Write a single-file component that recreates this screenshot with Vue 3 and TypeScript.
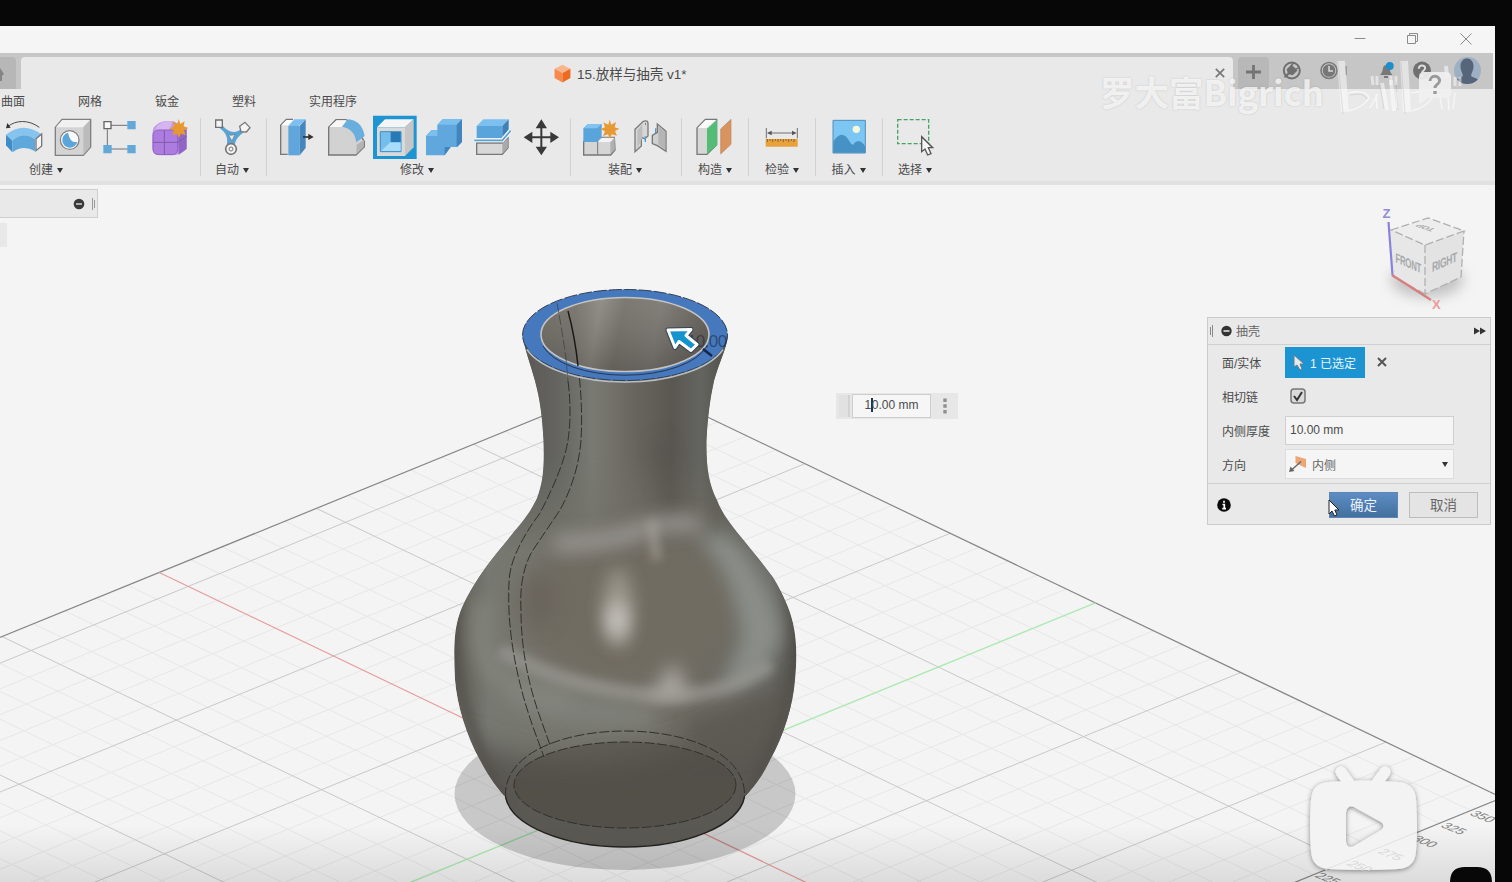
<script setup lang="ts">
interface GridLine {
  x1: number
  y1: number
  x2: number
  y2: number
  kind: string
}

const menuTabs: string[] = ['曲面', '网格', '钣金', '塑料', '实用程序']

// Projected ground plane: origin plus the screen vectors of one minor cell
const origin = { x: 624, y: 795.2 }
const red = { x: 29.05, y: 13.92 }
const green = { x: 31.43, y: -12.82 }

function project(i: number, j: number) {
  return {
    x: origin.x + i * red.x + j * green.x,
    y: origin.y + i * red.y + j * green.y,
  }
}

function line(i1: number, j1: number, i2: number, j2: number, kind: string): GridLine {
  const a = project(i1, j1)
  const b = project(i2, j2)
  return { x1: a.x, y1: a.y, x2: b.x, y2: b.y, kind }
}

function kindOf(n: number, edges: number[], axis: string): string {
  if (edges.includes(n)) return 'edge'
  if (n === 0) return axis
  return n % 5 === 0 ? 'major' : 'minor'
}

const rank: Record<string, number> = { minor: 0, major: 1, edge: 2, axisRed: 3, axisGreen: 3 }
const gridLines: GridLine[] = []
for (let i = -16; i <= 14; i++) {
  gridLines.push(line(i, -17, i, 15, kindOf(i, [-16, 14], 'axisGreen')))
}
for (let j = -17; j <= 15; j++) {
  gridLines.push(line(-16, j, 14, j, kindOf(j, [15], 'axisRed')))
}
gridLines.sort((a, b) => rank[a.kind] - rank[b.kind])

const rulerLabels = [
  { x: 1482, y: 817, text: '350' },
  { x: 1453, y: 829, text: '325' },
  { x: 1424, y: 842, text: '300' },
  { x: 1359, y: 867, text: '250' },
  { x: 1327, y: 879, text: '225' },
]

const vase =
  'M522.5 336 C525 350 530 363 535 381 C540 400 542 414 543.5 440 C544.5 468 543 482 537 498 C529 515 520 524 512 534 C499 550 486 565 475 583 C465 599 460 610 457 623 C453.500 638 454 660 455 680 C457 705 466 735 480 760 C489 777 497 788 505.500 797 A120 55 0 0 0 744.500 797 C753 788 762 777 770 760 C784 735 793 705 795 680 C797 660 797 640 793 623 C790 610 784 595 773 577 C762 562 750 548 737 532 C730 523 722 513 717 500 C709 484 706 468 706.500 440 C708 414 710 400 714 381 C719 363 726 350 728 336 Z'
</script>

<template>
  <div class="screen">
    <div class="app">
      <div class="titlebar">
        <svg class="winbtns" viewBox="0 0 150 27" width="150" height="27">
          <g fill="none" stroke="#8b8b8b">
            <path d="M9.500 12.500h11" />
            <path d="M62.500 9.500h8v8h-8zM64.500 9.500v-2h8v8h-2" />
            <path d="M115.500 7.500l11 11M126.500 7.500l-11 11" />
          </g>
        </svg>
      </div>

      <header class="doc-strip">
        <div class="home-tab">
          <svg viewBox="0 0 16 32" width="16" height="32"><path d="M0 11l4 6-2 2v5H0z" fill="#858585" /></svg>
        </div>
        <div class="doc-tab">
          <svg viewBox="0 0 16 18" width="17" height="19">
            <path d="M8 .8l7.500 3.700L8 8.500.5 4.500z" fill="#f9b58c" />
            <path d="M.5 4.500L8 8.500v9L.5 13.200z" fill="#f58a4c" />
            <path d="M15.500 4.500L8 8.500v9l7.500-4.300z" fill="#ee6b1e" />
          </svg>
          <span class="doc-title">15.放样与抽壳 v1*</span>
          <svg class="doc-close" viewBox="0 0 10 10" width="10" height="10"><path d="M.8.8l8.400 8.400M9.200.8L.8 9.200" stroke="#777" stroke-width="1.700" /></svg>
        </div>
        <svg class="strip-tools" viewBox="1233 53 262 36" width="262" height="36">
          <path d="M1238 89V61q0-4 4-4h23q4 0 4 4v28z" fill="#b8b8b8" />
          <path d="M1246 72h15M1253.500 65v14" stroke="#747474" stroke-width="2.800" />
          <circle cx="1291.800" cy="70.500" r="8" fill="none" stroke="#6f6f6f" stroke-width="2" />
          <path d="M1284.500 77l4-4-1-3.500 4-4 5 5-4 4-3.500-1-3 3zM1290.500 66.500l3-3.500M1294.500 70.500l4-3" fill="#6f6f6f" stroke="#6f6f6f" stroke-width="1.500" />
          <circle cx="1329" cy="70.500" r="8" fill="none" stroke="#7b7b7b" stroke-width="1.600" />
          <circle cx="1329" cy="70.500" r="6.300" fill="#777" />
          <path d="M1329 66v5h4" fill="none" stroke="#d9d9d9" stroke-width="1.500" />
          <path d="M1346 66v9" stroke="#8c8c98" stroke-width="1.500" />
          <path d="M1380 75c2-2 2.500-4 3-7 .5-4 6-4 6.500 0 .5 3 1 5 3 7zM1384 76h4v2h-4z" fill="#787878" />
          <circle cx="1389.800" cy="66" r="3.900" fill="#1d8dcb" />
          <circle cx="1422" cy="70.500" r="9" fill="#707070" />
          <path d="M1418.800 68.800c0-4.500 6.500-4.300 6.300-.5-.1 2.200-3 2.200-3 4.700" fill="none" stroke="#ddd" stroke-width="2" />
          <circle cx="1422.100" cy="75.800" r="1.200" fill="#ddd" />
          <circle cx="1467.500" cy="70.500" r="13.500" fill="#9fb0c4" />
          <path d="M1460.500 66c0-10 13-10 13 0 0 5-2 6-2.500 10 2 1.500 5 2 7 3.500-6 6-16 6-21 0 2-1.500 4-2 6-3.500-.5-4-2.500-5-2.500-10z" fill="#56657a" />
        </svg>
      </header>

      <nav class="ribbon">
        <div class="menu">
          <span v-for="t in menuTabs" :key="t">{{ t }}</span>
        </div>
        <div class="groups">
          <section class="group create">
            <div class="icons">
              <svg class="icon" viewBox="0 0 114 114">
                <path d="M8 26C32 6 70 4 103 28" fill="none" stroke="#4a4a4a" stroke-width="3" />
                <path d="M3 31l4-16 10 14z" fill="#333" />
                <path d="M3 50Q55 8 111 50L90 64Q55 38 22 68z" fill="#86c4f0" />
                <path d="M3 50l19 18v35L3 82z" fill="#3f8cc9" />
                <path d="M22 68Q55 38 90 64v36Q55 78 22 103z" fill="#5fa8db" />
                <path d="M93 62l17-14v36L93 98z" fill="#f6f6f6" stroke="#777" stroke-width="4" />
              </svg>
              <svg class="icon" viewBox="0 0 114 114">
                <path d="M4 28L24 4h86v83l-22 25H4z" fill="#d4d4d4" stroke="#808080" stroke-width="4" />
                <path d="M6 28L25 6h83L88 28z" fill="#f1f1f1" /><path d="M88 28l20-22v80l-20 24z" fill="#bcbcbc" />
                <circle cx="47" cy="66" r="28" fill="#fafafa" stroke="#858585" stroke-width="4" />
                <path d="M42 44a23 23 0 1 0 28 28Q48 76 42 44z" fill="#5aa5da" />
              </svg>
              <svg class="icon" viewBox="0 0 114 114">
                <path d="M24 22h50M13 34v48M24 93h50" stroke="#707070" stroke-width="3" />
                <path d="M3 11h21v21H3z" fill="#f8f8f8" stroke="#666" stroke-width="4" />
                <path d="M73 9h25v25H73zM1 81h25v25H1zM73 81h25v25H73z" fill="#62a9d9" />
              </svg>
              <svg class="icon" viewBox="0 0 114 114">
                <path d="M2 40Q2 25 22 14 35 6 65 10L103 30v62q-15 18-35 19H20Q2 112 1 90z" fill="#c49be8" />
                <path d="M15 25Q32 6 62 11L50 38H8z" fill="#d5b5f0" />
                <path d="M78 45l26-12v60L80 110z" fill="#9065c5" />
                <path d="M3 50q2-14 18-14h40q15 0 16 14v42q0 18-16 18H22Q3 110 3 92z" fill="#ac7ce0" stroke="#8e61c3" stroke-width="3" />
                <path d="M37 36v74M3 73h74L104 55" fill="none" stroke="#805aa8" stroke-width="3" />
                <path d="M80 3l5 15 13-8-3 15 14 5-13 7 5 14-15-4-5 13-6-13-14 5 5-14-14-7 14-5-4-15 14 7z" fill="#e79831" />
              </svg>
            </div>
            <div class="label">创建<i class="tri"></i></div>
          </section>

          <section class="group auto">
            <div class="icons">
              <svg class="icon" viewBox="0 0 114 114">
                <path d="M28 22c20 25 42 25 60 8l6 12C75 55 68 65 65 82l-24 2C46 60 40 45 20 30z" fill="#5ba3d2" />
                <path d="M46 50q10 4 20-1l-9 20z" fill="#e9e9e9" stroke="#5f7e92" stroke-width="2" />
                <path d="M8 6h20v22H8z" fill="#f4f4f4" stroke="#707070" stroke-width="4" />
                <path d="M96 13l15 16-11 13-16-1-4-16z" fill="#f4f4f4" stroke="#777" stroke-width="4" />
                <circle cx="54" cy="93" r="16" fill="#f4f4f4" stroke="#777" stroke-width="5" />
                <circle cx="54" cy="93" r="6" fill="none" stroke="#777" stroke-width="3" />
              </svg>
            </div>
            <div class="label">自动<i class="tri"></i></div>
          </section>

          <section class="group modify">
            <div class="icons">
              <svg class="icon" viewBox="0 0 114 114">
                <path d="M26 109H5V22L22 4h20" fill="#ddd" stroke="#777" stroke-width="4" />
                <path d="M7 22L23 6h20L28 22z" fill="#fff" />
                <path d="M28 24L46 4h34L60 24z" fill="#7cc0f1" /><path d="M28 24h34v88H28z" fill="#60a6dc" /><path d="M62 24L80 4v86l-18 22z" fill="#4586bd" />
                <path d="M72 57h18" stroke="#333" stroke-width="5" /><path d="M88 47l16 10-16 9z" fill="#333" />
              </svg>
              <svg class="icon" viewBox="0 0 114 114">
                <path d="M2 28L24 5h30l30 20 25 46v15L84 111H2z" fill="#d2d2d2" stroke="#777" stroke-width="4" />
                <path d="M4 27L26 7h30L42 27z" fill="#f7f7f7" /><path d="M86 80l22-14v20l-23 23z" fill="#b4b4b4" />
                <path d="M42 26L60 4q42 4 50 50L85 73Q80 32 42 26z" fill="#68aedf" />
              </svg>
              <svg class="icon shell" viewBox="0 0 114 114">
                <path d="M-12-7h131v130H-12z" fill="#1f94d2" />
                <path d="M0 28L24 4h86L84 28z" fill="#f5f5f5" /><path d="M84 28l26-24v84l-26 26z" fill="#c6c6c6" />
                <path d="M0 28h84v86H0z" fill="#d9d9d9" /><path d="M10 41h62v60H10z" fill="#77bdec" stroke="#378fc4" stroke-width="3" />
                <path d="M41 42h30v32H41z" fill="#267ab6" /><path d="M12 99l28-26h31v26z" fill="#a7dcfb" />
              </svg>
              <svg class="icon" viewBox="0 0 114 114">
                <path d="M0 54l16-17h18V20L50 4h58v68L94 87H74L56 112H0z" fill="#60a7de" />
                <path d="M34 20L50 4h58L92 20zM0 54l16-17h18v17z" fill="#7bbfef" /><path d="M92 20l16-16v68L92 87zM56 112V87h18z" fill="#4284bd" />
              </svg>
              <svg class="icon" viewBox="0 0 114 114">
                <path d="M5 24L25 4h76L82 24z" fill="#7bc0ef" /><path d="M5 24h77v36H5z" fill="#5aa4dc" /><path d="M82 24l19-20v33L82 57z" fill="#3e80b8" />
                <path d="M5 75h78l16-15v29L82 109H5z" fill="#d8d8d8" stroke="#777" stroke-width="4" /><path d="M82 76l16-15v28L82 107z" fill="#aaa" />
                <path d="M-2 67h84l25-30" fill="none" stroke="#f5f5f5" stroke-width="12" /><path d="M-2 67h84l25-29" fill="none" stroke="#55a4d8" stroke-width="5" />
              </svg>
              <svg class="icon" viewBox="0 0 114 114">
                <path d="M52 22v74M18 58h70" stroke="#393939" stroke-width="6" />
                <path d="M52 4l17 27H35zM52 112L35 86h34zM-1 58l26-17v34zM105 58L79 41v34z" fill="#393939" />
              </svg>
            </div>
            <div class="label">修改<i class="tri"></i></div>
          </section>

          <section class="group assemble">
            <div class="icons">
              <svg class="icon" viewBox="0 0 114 114">
                <path d="M2 70h42V58h50l2 38-13 15H2z" fill="#d5d5d5" stroke="#777" stroke-width="4" />
                <path d="M44 72l14-13h37L82 72z" fill="#f4f4f4" /><path d="M44 71v39" stroke="#777" stroke-width="3" /><path d="M82 72l13-12v36l-13 13z" fill="#b1b1b1" />
                <path d="M1 31l14-13h41v40L43 72H1z" fill="#5aa4dc" /><path d="M1 31l14-13h40L43 31z" fill="#82c4f1" />
                <path d="M80 5l5 15 14-8-4 16 14 4-13 7 6 14-16-4-5 13-6-13-15 5 6-14-14-7 14-5-5-15 15 7z" fill="#e79a34" />
              </svg>
              <svg class="icon" viewBox="0 0 114 114">
                <path d="M9 34L34 10q15-5 14 8v36l-10 8-10-4v26L9 101z" fill="#d7d7d7" stroke="#7a7a7a" stroke-width="4" />
                <path d="M16 37l15-18v40L16 91z" fill="#bdbdbd" /><path d="M39 18h3" stroke="#666" stroke-width="4" />
                <path d="M40 55v17M71 31v16" stroke="#4d9dd5" stroke-width="4" />
                <path d="M76 18l26 22v60L76 83 61 77V52l15-9z" fill="#d0d0d0" stroke="#777" stroke-width="4" /><path d="M79 22l21 19v54L79 79z" fill="#b5b5b5" />
              </svg>
            </div>
            <div class="label">装配<i class="tri"></i></div>
          </section>

          <section class="group">
            <div class="icons">
              <svg class="icon" viewBox="0 0 114 114">
                <path d="M3 30L28 4h34v76l-29 29H3z" fill="#d7d7d7" stroke="#777" stroke-width="4" /><path d="M5 30L29 6h31L33 30z" fill="#fafafa" />
                <path d="M33 32L63 5v76l-30 28z" fill="#54bd75" /><path d="M74 33l31-29v75l-31 29z" fill="#d8935f" stroke="#b88b66" stroke-width="2" />
              </svg>
            </div>
            <div class="label">构造<i class="tri"></i></div>
          </section>

          <section class="group">
            <div class="icons">
              <svg class="icon" viewBox="0 0 114 114">
                <path d="M10 30v31M103 30v31M17 45h78" stroke="#707070" stroke-width="3" /><path d="M12 45l14-7v14zM101 45l-14-7v14z" fill="#555" />
                <path d="M8 63h96v23H8z" fill="#e9a23b" /><path d="M13 63v9m8-9v6m8-6v9m8-9v6m8-6v9m8-9v6m8-6v9m8-9v6m8-6v9m8-9v6m8-6v9" stroke="#795522" stroke-width="2.500" />
              </svg>
            </div>
            <div class="label">检验<i class="tri"></i></div>
          </section>

          <section class="group insert">
            <div class="icons">
              <svg class="icon" viewBox="0 0 114 114">
                <path d="M9 7h97v98H9z" fill="#7cc6f3" stroke="#508dba" stroke-width="3" />
                <path d="M10 71q25-40 48-2 5 11 12 11 6-11 16-10 10 0 19 15v19H10z" fill="#4792c5" /><circle cx="79" cy="34" r="11" fill="#f7f8db" />
              </svg>
            </div>
            <div class="label">插入<i class="tri"></i></div>
          </section>

          <section class="group last">
            <div class="icons">
              <svg class="icon" viewBox="0 0 114 114">
                <path d="M5 5h93v72H5z" fill="none" stroke="#45a366" stroke-width="4" stroke-dasharray="12 6" />
                <path d="M77 56v45l10-8 8 18 10-4-8-18h13z" fill="#f7f7f7" stroke="#555" stroke-width="4" />
              </svg>
            </div>
            <div class="label">选择<i class="tri"></i></div>
          </section>
        </div>
      </nav>

      <main class="canvas">
        <svg class="scene" viewBox="0 185 1495 697" width="1495" height="697">
          <defs>
            <clipPath id="vaseClip"><path :d="vase" /></clipPath>
            <linearGradient id="bodyFill" gradientUnits="userSpaceOnUse" x1="454" y1="0" x2="797" y2="0">
              <stop offset="0" stop-color="#5d5b55" /><stop offset=".1" stop-color="#777871" /><stop offset=".35" stop-color="#75756c" />
              <stop offset=".7" stop-color="#6d6a61" /><stop offset=".92" stop-color="#6b6c67" /><stop offset="1" stop-color="#55534e" />
            </linearGradient>
            <linearGradient id="neckFill" gradientUnits="userSpaceOnUse" x1="530" y1="0" x2="720" y2="0">
              <stop offset="0" stop-color="#5d5b57" /><stop offset=".13" stop-color="#63635f" /><stop offset=".33" stop-color="#797a73" />
              <stop offset=".55" stop-color="#69655e" /><stop offset=".75" stop-color="#5a5752" /><stop offset=".9" stop-color="#646560" /><stop offset="1" stop-color="#565550" />
            </linearGradient>
            <linearGradient id="mouthFill" x1="0" x2="1" y1="0" y2=".08">
              <stop offset="0" stop-color="#6e6b64" /><stop offset=".22" stop-color="#787770" /><stop offset=".36" stop-color="#97938d" />
              <stop offset=".5" stop-color="#78756f" /><stop offset=".72" stop-color="#817d78" /><stop offset="1" stop-color="#5a5751" />
            </linearGradient>
            <linearGradient id="mouthShade" x1="0" x2="0" y1="0" y2="1">
              <stop offset="0" stop-color="#8a8680" stop-opacity=".3" /><stop offset="1" stop-color="#4b4843" stop-opacity=".5" />
            </linearGradient>
            <linearGradient id="neckFade" gradientUnits="userSpaceOnUse" x1="0" y1="455" x2="0" y2="550">
              <stop offset="0" stop-color="#fff" /><stop offset="1" stop-color="#000" />
            </linearGradient>
            <mask id="neckMask" maskUnits="userSpaceOnUse" x="440" y="280" width="370" height="290"><rect x="440" y="280" width="370" height="290" fill="url(#neckFade)" /></mask>
            <linearGradient id="floorShade" x1="0" x2="0" y1="0" y2="1">
              <stop offset="0" stop-color="#000" stop-opacity="0" /><stop offset="1" stop-color="#000" stop-opacity=".1" />
            </linearGradient>
            <filter id="b4" filterUnits="userSpaceOnUse" x="380" y="250" width="500" height="680"><feGaussianBlur stdDeviation="5" /></filter>
            <filter id="b8" filterUnits="userSpaceOnUse" x="380" y="250" width="500" height="680"><feGaussianBlur stdDeviation="9" /></filter>
            <filter id="b14" filterUnits="userSpaceOnUse" x="380" y="250" width="500" height="680"><feGaussianBlur stdDeviation="14" /></filter>
            <filter id="cubeBlur" filterUnits="userSpaceOnUse" x="1350" y="230" width="150" height="100"><feGaussianBlur stdDeviation="7" /></filter>
          </defs>

          <line v-for="(l, k) in gridLines" :key="k" :x1="l.x1" :y1="l.y1" :x2="l.x2" :y2="l.y2" :class="l.kind" />
          <g class="ruler">
            <text v-for="r in rulerLabels" :key="r.text" :transform="`translate(${r.x} ${r.y}) matrix(.78 .32 -.7 .4 0 0)`" text-anchor="middle" dominant-baseline="middle">{{ r.text }}</text>
          </g>

          <ellipse cx="625" cy="794" rx="170.500" ry="76" fill="#000" fill-opacity=".18" />

          <g clip-path="url(#vaseClip)">
            <path :d="vase" fill="url(#bodyFill)" />
            <ellipse cx="625" cy="610" rx="110" ry="75" fill="#716c62" filter="url(#b14)" />
            <path d="M455 735Q520 765 610 760T800 675V870H450z" fill="#5a5852" filter="url(#b14)" />
            <path d="M500 700Q560 738 660 728L650 706 520 680z" fill="#7e7f78" filter="url(#b8)" />
            <path d="M695 535Q735 570 742 640L720 690Q768 680 782 635 778 590 725 528z" fill="#8a8e88" filter="url(#b8)" />
            <path d="M484 600Q472 650 495 672T570 702" fill="none" stroke="#84857e" stroke-width="17" filter="url(#b8)" />
            <path d="M500 650Q560 685 640 694T770 664" fill="none" stroke="#9d9b97" stroke-width="15" filter="url(#b4)" opacity=".65" />
            <path d="M690 718Q750 707 795 680V735Q740 765 690 755z" fill="#5d5a53" filter="url(#b8)" opacity=".85" />
            <rect x="440" y="280" width="370" height="290" fill="url(#neckFill)" mask="url(#neckMask)" />
            <path d="M660 440Q668 490 672 525" fill="none" stroke="#53504b" stroke-width="12" filter="url(#b8)" opacity=".6" />
            <path d="M555 543Q600 545 635 532T700 525" fill="none" stroke="#9c9a97" stroke-width="17" filter="url(#b8)" opacity=".9" />
            <path d="M652 520Q653 540 657 560" fill="none" stroke="#a8a29a" stroke-width="10" filter="url(#b4)" opacity=".6" />
            <ellipse cx="540" cy="600" rx="16" ry="28" fill="#69645b" filter="url(#b8)" opacity=".8" />
            <ellipse cx="618" cy="608" rx="14" ry="40" fill="#a29d93" filter="url(#b8)" opacity=".9" />
            <ellipse cx="617" cy="620" rx="10" ry="18" fill="#cbc8c4" filter="url(#b8)" />
            <path d="M674 662l17 34-44 4z" fill="#aba7a2" filter="url(#b8)" />
            <path d="M457 600Q444 690 507 803M794 600Q808 690 743 803" fill="none" stroke="#504e49" stroke-width="7" filter="url(#b4)" opacity=".75" />
          </g>
          <ellipse cx="625" cy="785" rx="111" ry="43" fill="#4b4842" fill-opacity=".5" />
          <path d="M505.500 797A120 55 0 0 0 744.500 797" fill="none" stroke="#22211f" stroke-width="1.400" />
          <g fill="none" stroke="#30302b" stroke-width="1" stroke-dasharray="10 2.500">
            <path d="M505.500 797C501 709 749 709 744.500 797" />
            <ellipse cx="625" cy="785" rx="111" ry="43" />
            <path d="M568 381Q572 413 568 440T540 513Q509 555 509 583 506 650 533 727L544 757" />
            <path d="M578 365Q583 405 581 440 578 477 560 510L533 550Q519 573 521 610 521 664 540 717L550 745" />
          </g>

          <path fill-rule="evenodd" d="M522.500 335a102.500 45.500 0 1 0 205 0a102.500 45.500 0 1 0-205 0zM541 334.500a84 37 0 1 1 168 0a84 37 0 1 1-168 0z" fill="#4678be" />
          <ellipse cx="625" cy="335" rx="102.500" ry="45.500" fill="none" stroke="#333e51" stroke-width="1" stroke-dasharray="13 2" />
          <path d="M527 349.500A102.500 46 0 0 0 723 349.500" fill="none" stroke="#b9bdc2" stroke-width="1.500" />
          <ellipse cx="625" cy="334.500" rx="84" ry="37" fill="url(#mouthFill)" />
          <ellipse cx="625" cy="334.500" rx="84" ry="37" fill="url(#mouthShade)" stroke="#c4c3c1" stroke-width="1.600" />
          <path d="M543 346A84.500 38.500 0 0 0 707 346" fill="none" stroke="#28364d" stroke-width="1" />
          <path d="M557 303Q562 330 566 358L568 381" fill="none" stroke="#38413f" stroke-dasharray="10 2.500" opacity=".7" />
          <path d="M568 311Q575 337 578 366" fill="none" stroke="#171716" stroke-width="1.400" />
          <text x="687" y="347" class="dimension">10.00</text>
          <path d="M703 349l9 7" stroke="#14264b" stroke-width="2.500" />
          <path d="M668 330l23-.5-5 6 11 9-6 6-12-9-4 6z" fill="#1593cf" stroke="#314454" stroke-width="5" stroke-linejoin="round" />
          <path d="M668 330l23-.5-5 6 11 9-6 6-12-9-4 6z" fill="#1593cf" stroke="#fff" stroke-width="3" stroke-linejoin="round" />

          <g class="viewcube">
            <ellipse cx="1427" cy="280" rx="36" ry="17" fill="#aaa" filter="url(#cubeBlur)" opacity=".7" />
            <path d="M1391 230l37-12 36 13-39 14z" fill="#ededed" />
            <path d="M1391 230l34 15v49l-33-18z" fill="#e7e7e7" />
            <path d="M1425 245l39-14-3 46-36 17z" fill="#e3e3e3" />
            <path d="M1391 230l37-12 36 13-39 14zM1425 245v49l36-17 3-46M1425 294l-33-18" fill="none" stroke="#b0b0b0" stroke-width="1.300" stroke-dasharray="8 3" />
            <path d="M1388.500 222l4 53" stroke="#8583dc" stroke-width="2.200" />
            <path d="M1392 275l39 25" stroke="#d97d7d" stroke-width="2.200" />
            <text class="axis-z" x="1382.500" y="218">Z</text>
            <text class="axis-x" x="1432" y="309">X</text>
            <text class="face" transform="matrix(.68 .3 0 1.150 1395.500 262)">FRONT</text>
            <text class="face" transform="matrix(.74 -.32 0 1.150 1432 272)">RIGHT</text>
            <text class="face top" transform="matrix(-.7 -.22 .6 -.3 1436 229)">TOP</text>
          </g>
          <rect x="0" y="825" width="1495" height="57" fill="url(#floorShade)" />
        </svg>

        <div class="browser-bar">
          <svg viewBox="0 0 22 14" width="22" height="14"><circle cx="6" cy="7" r="5.300" fill="#3a3a3a" /><path d="M3 7h6" stroke="#eee" stroke-width="1.300" /><path d="M19.500 1v12" stroke="#999" /><path d="M21.500 3v8" stroke="#999" /></svg>
        </div>
        <div class="browser-stub"></div>

        <div class="hud">
          <i class="grip"></i>
          <div class="hud-input">1<b></b>0.00 mm</div>
          <svg viewBox="0 0 4 16" width="4" height="16"><path d="M.3.500h3.400v3.400H.3zM.3 6.300h3.400v3.400H.3zM.3 12.100h3.400v3.400H.3z" fill="#909090" /></svg>
        </div>

        <aside class="dialog">
          <div class="dlg-head">
            <svg viewBox="0 0 26 14" width="26" height="14"><path d="M1.500 3v8M3.500 1v12" stroke="#888" /><circle cx="17.500" cy="7" r="5.200" fill="#333" /><path d="M14.500 7h6" stroke="#eee" stroke-width="1.500" /></svg>
            <span>抽壳</span>
            <svg class="ff" viewBox="0 0 12 8" width="12" height="8"><path d="M0 .5L6 4 0 7.500zM6 .5L12 4 6 7.500z" fill="#333" /></svg>
          </div>
          <div class="dlg-row">
            <label>面/实体</label>
            <div class="pick">
              <svg viewBox="0 0 12 17" width="12" height="17"><path d="M1 1v12l3-2 3 5 2-1-2-5h4z" fill="#e9e9e9" stroke="#5f7f91" /></svg>
              <span>1 已选定</span>
            </div>
            <svg class="clear" viewBox="0 0 10 10" width="10" height="10"><path d="M1 1l8 8M9 1L1 9" stroke="#555" stroke-width="2" /></svg>
          </div>
          <div class="dlg-row">
            <label>相切链</label>
            <svg class="check" viewBox="0 0 16 16" width="16" height="16"><rect x="1" y="1" width="14" height="14" rx="3" fill="#dadada" stroke="#777" stroke-width="1.500" /><path d="M4 8l3 4 5-8" fill="none" stroke="#333" stroke-width="2" /></svg>
          </div>
          <div class="dlg-row">
            <label>内侧厚度</label>
            <div class="field">10.00 mm</div>
          </div>
          <div class="dlg-row">
            <label>方向</label>
            <div class="field select">
              <svg viewBox="0 0 18 18" width="18" height="18"><path d="M6.500 1L17 4v9L6.500 8z" fill="#eca675" /><path d="M2 15.500L12 6.500" stroke="#666" stroke-width="1.400" /><path d="M0 17l1.500-5.500L5.500 16z" fill="#666" /></svg>
              <span>内侧</span>
              <i class="tri"></i>
            </div>
          </div>
          <div class="dlg-foot">
            <svg viewBox="0 0 14 14" width="14" height="14"><circle cx="7" cy="7" r="6.800" fill="#0a0a0a" /><path d="M7 2.700v2.100M5.500 6.500h1.800v4M5.300 10.600h3.700" stroke="#fff" stroke-width="1.700" /></svg>
            <button class="ok">确定</button>
            <button class="cancel">取消</button>
          </div>
        </aside>
        <svg class="pointer" viewBox="0 0 12 18" width="12" height="18"><path d="M1 1v14l3-3 2.500 5 2.500-1-2.200-5H11z" fill="#fff" stroke="#222" /></svg>

        <svg class="player-mark" viewBox="1290 755 205 127" width="205" height="127">
          <defs>
            <filter id="markShadow" x="-20%" y="-20%" width="140%" height="140%"><feDropShadow dx="0" dy="1" stdDeviation="2.500" flood-opacity=".45" /></filter>
          </defs>
          <g filter="url(#markShadow)">
            <path d="M1341 772l8 11M1385 772l-8 11" stroke="#f4f4f4" stroke-width="11" stroke-linecap="round" />
            <path fill-rule="evenodd" d="M1329 782q34-3 69 0 17 1 18 18 2 26 0 51-1 17-18 18-35 2-69 0-17-1-18-18-2-26 0-51 1-17 18-18zM1346 812v30q1 7 8 4l27-16q5-4 0-8l-27-15q-6-3-8 5z" fill="#f3f3f3" />
          </g>
          <text class="ghost" transform="translate(1390 855) matrix(.78 .32 -.7 .4 0 0)" text-anchor="middle" dominant-baseline="middle">275</text>
          <text class="ghost" transform="translate(1359 867) matrix(.78 .32 -.7 .4 0 0)" text-anchor="middle" dominant-baseline="middle">250</text>
          <path d="M1325 870L1417 832" stroke="#e2e2e2" />
          <path d="M1450 882q0-15 15-15h12q15 0 15 15z" fill="#080808" />
        </svg>
      </main>
    </div>

    <div class="watermark">
      <span>罗大富Bigrich</span>
      <svg viewBox="1335 55 130 62" width="130" height="62">
        <g fill="none" stroke="#fff" stroke-opacity=".5">
          <path d="M1341 61l4 51M1404 61l3 51" stroke-width="8" />
          <path d="M1382 83l5 27M1391 80l3 31M1446 66l1 12" stroke-width="4" />
          <path d="M1372 76l1 9M1377 76v9M1391 76v9M1396 76v9M1455 77v9M1460 77v9" stroke-width="3" />
        </g>
        <g fill="none" stroke="#fff" stroke-width="1.500">
          <path d="M1348 93q18-4 21 5-4 8-20 13M1411 93q18-4 21 5-4 8-20 13M1376 94l1 15M1397 92v16M1440 96l2 13M1448 96l1 14M1455 93l-2 16M1370 108l8-14" stroke-opacity=".6" />
        </g>
        <path d="M1338 62l5 52M1401 62l4 52M1350 95q14-3 17 4M1380 85l4 24M1396 82l2 28" fill="none" stroke="#999" stroke-opacity=".25" />
        <path d="M1424 72h22q5 0 5 5v16q0 5-5 5h-17l-10 6V77q0-5 5-5z" fill="#f0f0f0" fill-opacity=".92" />
        <path d="M1430 81c.5-6.500 10-6 9.500 0-.3 3.500-4.500 3.500-4.500 7" fill="none" stroke="#9b9b9b" stroke-width="3" />
        <path d="M1433.300 91h3.400v3h-3.400z" fill="#9b9b9b" />
      </svg>
    </div>
  </div>
</template>

<style>
body {
  margin: 0;
  background: #080808;
}
</style>

<style scoped>
.screen {
  position: relative;
  box-sizing: border-box;
  width: 1512px;
  height: 882px;
  padding-top: 26px;
  overflow: hidden;
  background: #070707;
  font-family: "Liberation Sans", "Noto Sans CJK SC", sans-serif;
  color: #4b4b4b;
}
svg { display: block; flex: none; }
.app {
  display: flex;
  flex-direction: column;
  width: 1495px;
  height: 856px;
  background: #f4f4f4;
}
.titlebar {
  display: flex;
  justify-content: flex-end;
  height: 27px;
  background: #f5f5f5;
}
.doc-strip {
  display: flex;
  align-items: flex-end;
  height: 36px;
  width: 1493px;
  background: #c6c6c6;
}
.home-tab {
  width: 16px;
  height: 32px;
  margin-right: 5px;
  border-radius: 0 4px 0 0;
  background: #b7b7b7;
}
.doc-tab {
  display: flex;
  align-items: center;
  box-sizing: border-box;
  width: 1212px;
  height: 32px;
  padding: 0 8px 0 533px;
  border-radius: 4px 4px 0 0;
  background: #e9e9e9;
}
.doc-title { margin-left: 6px; font-size: 13.5px; white-space: nowrap; }
.doc-close { margin-left: auto; }
.strip-tools { margin-right: -2px; }
.ribbon {
  height: 92px;
  border-bottom: 4px solid #e1e1e1;
  background: #e9e9e9;
}
.menu {
  display: flex;
  gap: 53px;
  height: 24px;
  padding-left: 1px;
  font-size: 12px;
  line-height: 26px;
}
.groups { display: flex; margin-top: 5px; }
.group {
  box-sizing: border-box;
  width: 67px;
  height: 58px;
  border-right: 1px solid #d2d2d2;
}
.group.create { width: 201px; padding-left: 5px; }
.group.auto { width: 66px; padding-right: 3px; }
.group.modify { width: 304px; }
.modify .icons { padding-left: 4px; }
.modify .label { padding-right: 3px; }
.group.assemble { width: 111px; }
.assemble .label { padding-right: 2px; }
.group.insert { padding-right: 1px; }
.group.last { border-right: 0; padding-right: 3px; }
.icons { display: flex; justify-content: center; gap: 11px; }
.create .icons { justify-content: flex-start; }
.icon { width: 38px; height: 38px; overflow: visible; }
.label {
  display: flex;
  align-items: center;
  justify-content: center;
  gap: 4px;
  height: 14px;
  margin-top: 7px;
  font-size: 12px;
  line-height: 14px;
}
.create .label { justify-content: flex-start; padding-left: 24px; }
.tri {
  border: 3.5px solid transparent;
  border-top: 5px solid #333;
  border-bottom: 0;
}
.canvas {
  position: relative;
  flex: 1;
  overflow: hidden;
}
.minor { stroke: #e7e7e7; }
.major { stroke: #c8c8c8; }
.edge { stroke: #868686; stroke-width: 1.2; }
.axisRed { stroke: #e79b9b; stroke-width: 1.2; }
.axisGreen { stroke: #abe9b0; stroke-width: 1.4; }
.ruler { font: 16px "Liberation Sans", sans-serif; fill: #858585; }
.ghost { font: 16px "Liberation Sans", sans-serif; fill: #d8d8d8; }
.dimension { font-size: 17px; fill: #17233a; fill-opacity: .55; letter-spacing: -.6px; }
.axis-z { font-size: 13px; font-weight: 700; fill: #8e8cd8; }
.axis-x { font-size: 13px; font-weight: 700; fill: #ec9b9b; }
.face { font-size: 11.5px; font-weight: 700; letter-spacing: -.4px; fill: #a5a7aa; }
.face.top { font-size: 12px; fill: #aaa; }
.browser-bar {
  position: absolute;
  top: 4px;
  left: -2px;
  display: flex;
  justify-content: flex-end;
  align-items: center;
  box-sizing: border-box;
  width: 100px;
  height: 29px;
  padding-right: 2px;
  border: 1.5px solid #cfcfcf;
  background: #e9e9e9;
}
.browser-stub {
  position: absolute;
  top: 38px;
  left: 0;
  width: 7px;
  height: 24px;
  background: #e8e8e8;
}
.hud {
  position: absolute;
  left: 836px;
  top: 208px;
  display: flex;
  align-items: center;
  width: 122px;
  height: 26px;
  background: #e7e7e7;
}
.grip {
  width: 9px;
  height: 22px;
  margin: 0 2px 0 3px;
  border-right: 2px solid #d2d2d2;
  background: #e1e1e1;
}
.hud-input {
  display: flex;
  align-items: center;
  justify-content: center;
  box-sizing: border-box;
  width: 79px;
  height: 24px;
  margin-right: 12px;
  padding-bottom: 2px;
  border: 1.5px solid #cdcdcd;
  background: #f6f6f6;
  font-size: 12px;
  white-space: pre;
}
.hud-input b { width: 1.5px; height: 14px; margin-right: -1px; background: #234; }
.dialog {
  position: absolute;
  left: 1207px;
  top: 132px;
  box-sizing: border-box;
  width: 284px;
  height: 208px;
  border: 1.5px solid #cbcbcb;
  background: #e9e9e9;
  font-size: 12px;
}
.dlg-head {
  display: flex;
  align-items: center;
  height: 26px;
  padding: 0 4px 0 1px;
  border-bottom: 1px solid #cfcfcf;
}
.dlg-head span { margin: -2px 0 0 1px; color: #666; }
.ff { margin-left: auto; }
.dlg-row {
  display: flex;
  align-items: center;
  height: 34px;
  padding-left: 14px;
}
.dlg-row label { width: 63px; }
.pick {
  display: flex;
  align-items: center;
  box-sizing: border-box;
  width: 80px;
  height: 31px;
  padding-left: 8px;
  background: #1d94d2;
  color: #e6f5ff;
}
.pick span { margin-left: 5px; white-space: nowrap; }
.clear { margin-left: 12px; }
.check { margin-left: 5px; }
.field {
  display: flex;
  align-items: center;
  box-sizing: border-box;
  width: 169px;
  height: 29px;
  padding: 0 5px 1px 4px;
  border: 1.5px solid #cfcfcf;
  background: #f5f5f5;
}
.field.select { height: 30px; padding: 0 5px 0 3px; border-color: #ddd; color: #666; }
.select span { margin-left: 5px; }
.select .tri { margin-left: auto; }
.dlg-foot {
  display: flex;
  align-items: center;
  height: 41px;
  margin-top: 2px;
  padding: 0 12px 0 9px;
  border-top: 1px solid #cfcfcf;
}
button {
  box-sizing: border-box;
  width: 69px;
  height: 26px;
  padding: 0 0 1px;
  font: 13.5px "Liberation Sans", "Noto Sans CJK SC", sans-serif;
  color: #666;
  background: #e4e4e4;
  border: 1.5px solid #bdbdbd;
}
button.ok {
  margin: 0 11px 0 auto;
  color: #e8f1fb;
  border: 1px solid #5d86b5;
  background: linear-gradient(#5d8dc3, #426f9e);
}
.pointer { position: absolute; left: 1328px; top: 314px; }
.player-mark { position: absolute; left: 1290px; top: 570px; }
.watermark {
  position: absolute;
  top: 55px;
  left: 1100px;
  display: flex;
  font: 500 34.5px/74px "Noto Sans CJK SC", sans-serif;
  font-weight: 700;
  color: rgba(255, 255, 255, .75);
  text-shadow: 0 0 2px rgba(120, 120, 120, .35);
  white-space: nowrap;
}
.watermark span { width: 235px; margin-top: -1px; }
</style>
